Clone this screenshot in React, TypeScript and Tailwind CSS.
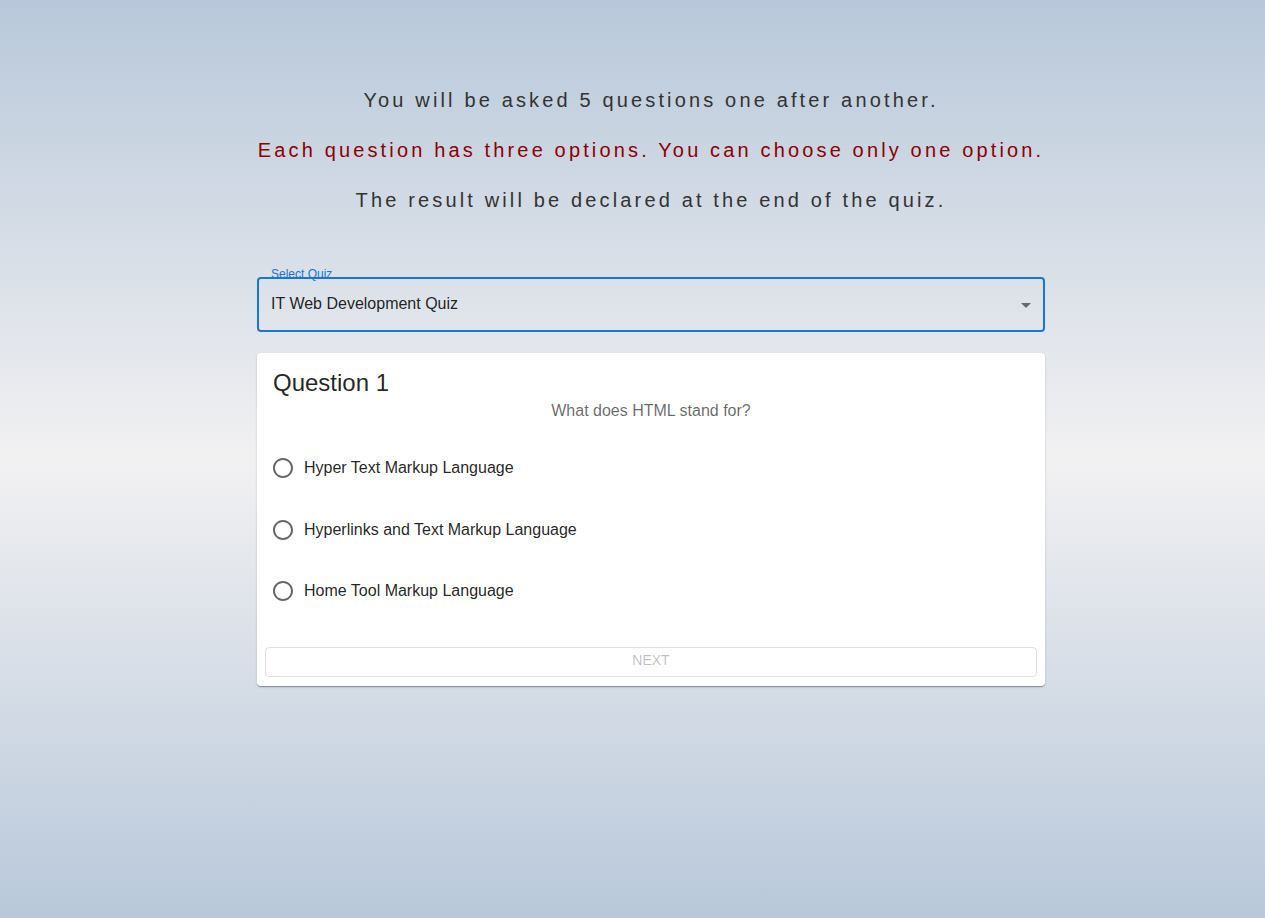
import React, { useState } from 'react';

const quiz = {
  title: 'IT Web Development Quiz',
  question: 'What does HTML stand for?',
  options: [
    'Hyper Text Markup Language',
    'Hyperlinks and Text Markup Language',
    'Home Tool Markup Language',
  ],
};

const RadioIcon: React.FC<{ checked: boolean }> = ({ checked }) => (
  <svg viewBox="0 0 24 24" className="w-6 h-6" fill={checked ? '#1976d2' : 'rgba(0,0,0,0.6)'}>
    <path d="M12 2C6.48 2 2 6.48 2 12s4.48 10 10 10 10-4.48 10-10S17.52 2 12 2zm0 18c-4.42 0-8-3.58-8-8s3.58-8 8-8 8 3.58 8 8-3.58 8-8 8z" />
    {checked && <circle cx="12" cy="12" r="5" />}
  </svg>
);

export default function App() {
  const [selected, setSelected] = useState<number | null>(null);

  return (
    <div
      className="min-h-screen w-full bg-gradient-to-b from-[#b8c8da] via-[#f2f1f2] to-[#b8c8da] flex justify-center pl-[37px]"
      style={{ fontFamily: '"Liberation Sans", Arial, sans-serif' }}
    >
      <div className="w-[788px] flex flex-col">
        {/* Instructions */}
        <div className="-mx-[60px] pt-[88px] flex flex-col gap-[26px] text-center text-[20px] leading-[24px] tracking-[3.15px] whitespace-nowrap">
          <p className="text-[#333333]">You will be asked 5 questions one after another.</p>
          <p className="text-[#8b0000]">Each question has three options. You can choose only one option.</p>
          <p className="text-[#333333]">The result will be declared at the end of the quiz.</p>
        </div>

        {/* Select */}
        <div className="relative mt-[65px] h-[55px] rounded border-2 border-[#1976d2] flex items-center pl-[12px] pr-[5px]">
          <span className="absolute left-[12px] -top-[11px] text-[12px] leading-[12px] text-[#1976d2]">
            Select Quiz
          </span>
          <span className="flex-1 text-[16px] pb-[2px] text-[rgba(0,0,0,0.87)]">{quiz.title}</span>
          <svg viewBox="0 0 24 24" className="w-6 h-6" fill="rgba(0,0,0,0.54)">
            <path d="M7 10l5 5 5-5z" />
          </svg>
        </div>

        {/* Question card */}
        <div className="mt-[21px] bg-white rounded shadow-[0_2px_1px_-1px_rgba(0,0,0,0.2),0_1px_1px_0_rgba(0,0,0,0.14),0_1px_3px_0_rgba(0,0,0,0.12)] pt-[14px] pb-[9px] px-[8px]">
          <h2 className="px-[8px] text-[24px] leading-8 text-[rgba(0,0,0,0.87)]">Question 1</h2>
          <p className="text-center text-[16px] leading-6 text-[rgba(0,0,0,0.6)]">{quiz.question}</p>

          <div className="mt-[24px] flex flex-col gap-[19.5px] -ml-[3px]">
            {quiz.options.map((opt, i) => (
              <label key={opt} className="h-[42px] flex items-center cursor-pointer" onClick={() => setSelected(i)}>
                <span className="p-[9px] flex">
                  <RadioIcon checked={selected === i} />
                </span>
                <span className="text-[16px] text-[rgba(0,0,0,0.87)]">{opt}</span>
              </label>
            ))}
          </div>

          <button
            disabled={selected === null}
            className="mt-[35px] w-full h-[30px] rounded border border-[rgba(0,0,0,0.12)] text-[14px] leading-[24px] pb-[4px] uppercase text-[rgba(0,0,0,0.26)] enabled:text-[#1976d2] enabled:border-[#1976d2]"
          >
            Next
          </button>
        </div>
      </div>
    </div>
  );
}
